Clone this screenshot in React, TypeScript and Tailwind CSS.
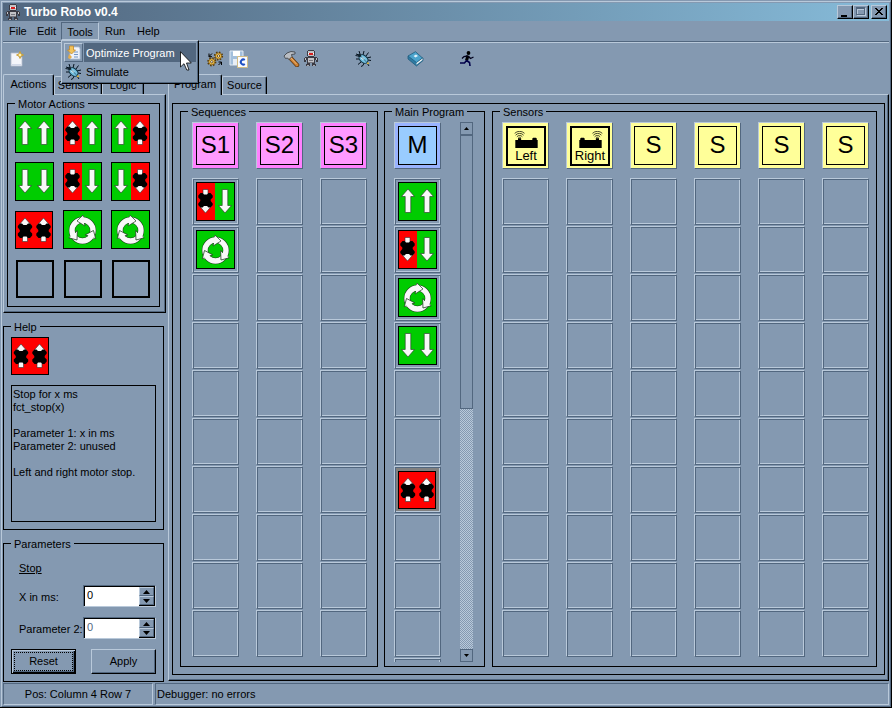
import React from "react";
import clsx from "clsx";

type ActionKind = "fwd" | "rightFwd" | "leftFwd" | "back" | "rightBack" | "leftBack" | "stop" | "ccw" | "cw";

const raised = "border border-t-[#b9c9da] border-l-[#b9c9da] border-r-[#52677f] border-b-[#52677f]";
const sunken = "border border-t-[#52677f] border-l-[#52677f] border-r-[#b9c9da] border-b-[#b9c9da]";

function Arrow({ x, down }: { x: number; down?: boolean }) {
  return (
    <path
      transform={down ? `translate(${x} 19) scale(1 -1)` : `translate(${x} 19)`}
      d="M0 -12 L6.5 -4.5 H2.8 V11.5 H-2.8 V-4.5 H-6.5 Z"
      fill="#f8f8f8"
      stroke="#2d4a2d"
      strokeWidth="0.7"
    />
  );
}

function StopMark({ x, down, y }: { x: number; down?: boolean; y?: number }) {
  return (
    <g transform={`translate(${x} ${y ?? 19}) scale(1 ${down ? -1 : 1})`}>
      <path d="M0 -13 L6.500 -5.500 H-6.500 Z M-2.500 4 H2.500 V10.500 H-2.500 Z" fill="#f8f8f8" stroke="#333" strokeWidth="0.6" />
      <path
        d="M-5 -7.500 H-3 L-1.500 -6 H1.500 L3 -7.500 H5 L7.200 -5 V-3.500 L5.200 -1 V0.500 L7.200 2.500 V4.500 L5 7 H3 L1.500 5.500 H-1.500 L-3 7 H-5 L-7.200 4.500 V2.500 L-5.200 0.500 V-1 L-7.200 -3.500 V-5 Z"
        fill="#000"
      />
    </g>
  );
}

function Rotate({ cw }: { cw?: boolean }) {
  const turns = [0, 120, 240];
  return (
    <g transform={`translate(19.5 20.5) scale(${cw ? -1 : 1} 1)`}>
      <circle r="10.500" fill="none" stroke="#1c3d1c" strokeWidth="6.400" />
      <circle r="10.500" fill="none" stroke="#f8f8f8" strokeWidth="5.400" />
      {turns.map((t) => (
        <g key={t} transform={`rotate(${t})`}>
          <path d="M0.500 -15.500 L-5.500 -9.500 L2.500 -4.500 L1.500 -7.500 V-13.300 Z" fill="#f8f8f8" />
          <path d="M1 -13.300 L0.500 -15.500 L-5.500 -9.500 L2.500 -4.500 L2 -7.500" fill="none" stroke="#1c3d1c" strokeWidth="0.7" />
        </g>
      ))}
    </g>
  );
}

function Tile({ kind }: { kind: ActionKind }) {
  const s = kind === "stop" ? 38 : 39;
  const red = "#ff0000";
  const green = "#00cc00";
  const left = kind === "stop" || kind === "rightFwd" || kind === "rightBack" ? red : green;
  const right = kind === "stop" || kind === "leftFwd" || kind === "leftBack" ? red : green;
  return (
    <svg width={s} height={s} viewBox={`0 0 ${s} ${s}`} className="block shrink-0">
      <rect width={s} height={s} fill="#000" />
      <rect x="1" y="1" width="19" height={s - 2} fill={left} />
      <rect x={kind === "leftFwd" || kind === "leftBack" ? 20 : 19} y="1" width={kind === "leftFwd" || kind === "leftBack" ? 18 : s - 20} height={s - 2} fill={right} />
      {kind === "fwd" && <><Arrow x={10} /><Arrow x={29} /></>}
      {kind === "back" && <><Arrow x={10} down /><Arrow x={29} down /></>}
      {kind === "rightFwd" && <><StopMark x={9.5} y={20} /><Arrow x={29} /></>}
      {kind === "leftFwd" && <><Arrow x={10} /><StopMark x={29} y={20} /></>}
      {kind === "rightBack" && <><StopMark x={9.5} y={18} down /><Arrow x={29} down /></>}
      {kind === "leftBack" && <><Arrow x={10} down /><StopMark x={29} y={18} down /></>}
      {kind === "stop" && <><StopMark x={10} y={20} /><StopMark x={28.5} y={20} /></>}
      {kind === "ccw" && <Rotate />}
      {kind === "cw" && <Rotate cw />}
    </svg>
  );
}

/* ---------- small pictures ---------- */

function RobotIcon() {
  return (
    <svg width="16" height="17" viewBox="0 0 16 17" className="block shrink-0" shapeRendering="crispEdges">
      <path d="M5 0h6v1h1v5h-1v1h3v1h1v4h-2v-2h-1v4h1v2H9v-3H7v3H3v-2h1v-4H3v2H1V8h1V7h3V6H4V1h1z" fill="#3b3b44" />
      <path d="M5 1h6v5H5z M5 8h6v5H5z M2 8h1v2H2z M13 8h1v2h-1z" fill="#c2c2c6" />
      <path d="M6 3h4v2H6z" fill="#d81e1e" />
      <path d="M5 3h1v1H5z M10 3h1v1h-1z" fill="#fff" />
      <path d="M6 10h4v1H6z M5 12h6v1H5z" fill="#77777f" />
      <path d="M4 15h2v1H4z M10 15h2v1h-2z" fill="#a8a8ae" />
    </svg>
  );
}

function NewIcon() {
  return (
    <svg width="16" height="16" viewBox="0 0 16 16" className="block shrink-0">
      <path d="M2 2h8v4h3v9H2z" fill="#f4f6fb" stroke="#b4bccd" strokeWidth="0.8" />
      <path d="M3 13h9v1.5H3z" fill="#d3daea" />
      <path d="M11 0.5l1 2.5 2.5 1-2.5 1-1 2.500-1-2.500-2.500-1 2.500-1z" fill="#fff2a8" stroke="#c99a2c" strokeWidth="0.9" />
    </svg>
  );
}

function GearsIcon() {
  return (
    <svg width="17" height="16" viewBox="0 0 17 16" className="block shrink-0">
      {[[11.500, 5], [4.800, 10.800]].map(([x, y]) => (
        <g key={x} transform={`translate(${x} ${y})`}>
          <circle r="3.700" fill="none" stroke="#5a3b04" strokeWidth="1.800" strokeDasharray="1.500 1.406" />
          <circle r="3" fill="#f9c84e" stroke="#7a5208" strokeWidth="0.7" />
          <circle r="1.200" fill="#fff" stroke="#4a3206" strokeWidth="0.8" />
        </g>
      ))}
      <path d="M2 5.500L5 2.500M2 2.500v3.200h3M14.500 11l-3 3M14.500 14v-3h-3" fill="none" stroke="#000" strokeWidth="1" />
    </svg>
  );
}

function SaveIcon() {
  return (
    <svg width="20" height="18" viewBox="0 0 20 18" className="block shrink-0">
      <path d="M1 1h13v14H1z" fill="#a3bfdc" stroke="#e0e9f3" />
      <path d="M4 1h7v5H4z" fill="#fff" />
      <path d="M4 9h4v6H4z" fill="#e8eef6" />
      <path d="M8.500 6.500h10v11h-10z" fill="#fafbff" stroke="#d3bd86" />
      <path d="M15.800 10a2.500 2.500 0 1 0 0 4" fill="none" stroke="#1d4fc4" strokeWidth="2" />
    </svg>
  );
}

function HammerIcon() {
  return (
    <svg width="17" height="16" viewBox="0 0 17 16" className="block shrink-0">
      <path d="M6.500 6l7.500 8" stroke="#5a3510" strokeWidth="4.500" strokeLinecap="round" />
      <path d="M6.500 6l7.500 8" stroke="#cf8235" strokeWidth="3" strokeLinecap="round" />
      <path d="M7 6l6.500 7" stroke="#eeb777" strokeWidth="1" />
      <path d="M1 5l3-3 4-1.500 4 .5v2L8.500 3.500 9 5.500 6 8.500 4.500 7 2.500 7.500z" fill="#b9bdc3" stroke="#42464c" strokeWidth="0.9" />
    </svg>
  );
}

function BugIcon() {
  return (
    <svg width="17" height="16" viewBox="0 0 17 16" className="block shrink-0">
      <path
        d="M4 4L1 3M5 3L4 0M8 4l1-4M11 5l2.500-3.500M12 7l4-1M13 9l3 .5M12 12l2 3M9 12l-1 2.500-2 1M6 11l-3 2.500M5 8H1M3 5l-2.500-.5"
        stroke="#06131f"
        fill="none"
      />
      <ellipse cx="8.500" cy="8" rx="5" ry="3.500" transform="rotate(40 8.500 8)" fill="#75bfe0" stroke="#0b3040" />
      <path d="M6.500 6.500l2.500 2" stroke="#e6fbff" strokeWidth="1.800" />
      <path d="M5 4.500l6.500 6.500" stroke="#1a5068" strokeWidth="0.7" />
      <circle cx="4.500" cy="4.500" r="1.700" fill="#12232f" />
      <path d="M12 11.500h2v1.500h-2z" fill="#d9b23a" />
    </svg>
  );
}

function BookIcon() {
  return (
    <svg width="17" height="16" viewBox="0 0 17 16" className="block shrink-0">
      <path d="M1 5v3l8.500 7L16 9.500V7z" fill="#2f7ba3" stroke="#225d7e" strokeWidth="0.8" />
      <path d="M9.500 11.500l6-4.500v2l-6 4.800z" fill="#f2f4f4" />
      <path d="M1 5l7.500-4.300 7 6.300-6 4.500z" fill="#4ba3cc" stroke="#225d7e" strokeWidth="0.8" />
      <path d="M6.500 5l2.500-1.500 2 1.500-2.500 1.500z" fill="#dff2fa" />
    </svg>
  );
}

function RunnerIcon() {
  return (
    <svg width="16" height="16" viewBox="0 0 16 16" className="block shrink-0">
      <circle cx="9.500" cy="2" r="1.900" fill="#000" />
      <path d="M9 4.500L7.500 9.500" stroke="#000" strokeWidth="3" />
      <path d="M8.500 5L5 5.500 3 7.500M9.500 5.500L11.500 7.500 14.500 6" stroke="#00001c" strokeWidth="1.300" fill="none" />
      <path d="M7.500 9.500l3 2 .5 3.500M7.500 9.500L5.500 12 1 12" stroke="#00004a" strokeWidth="1.600" fill="none" />
    </svg>
  );
}

function OptimizeIcon() {
  return (
    <svg width="16" height="16" viewBox="0 0 16 16" className="block shrink-0">
      <path d="M5 2h8l1 2v10H4V2z" fill="#eef2fa" stroke="#b3c2d8" strokeWidth="0.8" />
      <path d="M8 7h4M8 9.500h4M8 12h4" stroke="#7395c4" />
      <path d="M3.500 1h4v4h2L5.500 9 1.500 5h2z" fill="#f2c45c" stroke="#c3892a" strokeWidth="0.8" />
      <path d="M3 9l3 3-2 2-2-1z" fill="#e8ad48" />
    </svg>
  );
}

function SensorPicture({ side }: { side: "Left" | "Right" }) {
  return (
    <svg width="27" height="19" viewBox="0 0 27 19" className="block">
      <g transform={side === "Right" ? "translate(27 0) scale(-1 1)" : undefined}>
        <path d="M1 10h3v-2h3.500v2H20V8.500l1-1h3l1 1V10h1v9H1z" fill="#000" />
        <path d="M4.200 8a2 2 0 0 1 3.200 0M2.700 6.500a4 4 0 0 1 6.200 0M1.300 4.700a6 6 0 0 1 9 0M0.300 2.600a8 8 0 0 1 11 0" fill="none" stroke="#000" strokeWidth="0.8" />
      </g>
    </svg>
  );
}

/* ---------- building blocks ---------- */

function Group({ title, className, children }: { title: string; className?: string; children: React.ReactNode }) {
  return (
    <fieldset className={clsx("min-w-0 border border-black", className)}>
      <legend className="ml-[7px] h-[15px] px-[3px] pt-[2px] leading-[13px]">{title}</legend>
      {children}
    </fieldset>
  );
}

function Cell({ kind, label }: { kind?: ActionKind; label: string }) {
  return (
    <button
      type="button"
      aria-label={label}
      className={clsx(
        "block size-[47px] p-[3px] shadow-[inset_1px_1px_0_#52677f,inset_-1px_-1px_0_#b9c9da]",
        raised,
        kind === "stop" && "bg-[#808080]",
      )}
    >
      {kind && <Tile kind={kind} />}
    </button>
  );
}

function HeadCell({ text, outer, inner }: { text: string; outer: string; inner: string }) {
  return (
    <div className={clsx("size-[47px] p-[3px]", raised, outer)}>
      <div className={clsx("flex size-[39px] items-start justify-center border border-black text-[24px] leading-[35px]", inner)}>
        {text}
      </div>
    </div>
  );
}

function SensorHead({ side }: { side: "Left" | "Right" }) {
  return (
    <div className={clsx("size-[47px] bg-[#ffff99] p-[3px]", raised)}>
      <div className="flex size-10 flex-col items-center border-2 border-black pt-[3px]">
        <SensorPicture side={side} />
        <span className="text-[13px] leading-[16px]">{side}</span>
      </div>
    </div>
  );
}

function Column({ head, name, cells = {}, children }: { head: React.ReactNode; name: string; cells?: Record<number, ActionKind>; children?: React.ReactNode }) {
  return (
    <div className="flex w-[47px] shrink-0 flex-col">
      {head}
      <div className="mt-[9px] flex flex-col gap-px">
        {Array.from({ length: 10 }, (_, i) => (
          <Cell key={i} kind={cells[i]} label={`${name} row ${i + 1}`} />
        ))}
        {children}
      </div>
    </div>
  );
}

function Tab({ label, selected, className }: { label: string; selected?: boolean; className: string }) {
  return (
    <button
      type="button"
      role="tab"
      aria-selected={!!selected}
      className={clsx(
        "rounded-t-[2px] border border-b-0 border-t-[#b9c9da] border-l-[#b9c9da] border-r-black bg-[#8499b1] text-center shadow-[inset_-1px_0_0_#52677f]",
        selected ? "relative z-10 -mb-px h-[21px] pb-[2px]" : "h-[18px]",
        className,
      )}
    >
      {label}
    </button>
  );
}

function Spinner({ id, label, disabled }: { id: string; label: string; disabled?: boolean }) {
  return (
    <div className="flex h-[22px] items-center justify-between pr-[7px] pl-[15px]">
      <label htmlFor={id} className="pt-[2px] leading-[13px] whitespace-nowrap">{label}</label>
      <div className={clsx("flex h-[22px] w-[73px] shrink-0", sunken)}>
        <div className="flex flex-1 border-t border-l border-black bg-white">
          <input
            id={id}
            defaultValue="0"
            disabled={disabled}
            className={clsx("w-0 flex-1 bg-white pb-[2px] pl-[2px] outline-none", disabled ? "text-[#52677f]" : "text-black")}
          />
          <div className="flex w-4 flex-col border-r border-b border-black bg-[#8499b1]">
            <button type="button" aria-label="Increase" className={clsx("flex flex-1 items-center justify-center", raised)}>
              <svg width="7" height="4" viewBox="0 0 7 4"><path d="M3.500 0L7 4H0z" /></svg>
            </button>
            <button type="button" aria-label="Decrease" className={clsx("flex flex-1 items-center justify-center", raised)}>
              <svg width="7" height="4" viewBox="0 0 7 4"><path d="M0 0h7L3.500 4z" /></svg>
            </button>
          </div>
        </div>
      </div>
    </div>
  );
}

function WinButton({ label, children, className }: { label: string; children: React.ReactNode; className?: string }) {
  return (
    <button
      type="button"
      aria-label={label}
      className={clsx(
        "h-[14px] w-4 border border-t-[#b9c9da] border-l-[#b9c9da] border-r-black border-b-black bg-[#8499b1] shadow-[inset_-1px_-1px_0_#52677f]",
        className,
      )}
    >
      <svg width="14" height="12" viewBox="0 0 14 12" className="block" shapeRendering="crispEdges">{children}</svg>
    </button>
  );
}

function ToolButton({ label, className, children }: { label: string; className?: string; children: React.ReactNode }) {
  return (
    <button type="button" aria-label={label} className={clsx("flex h-5 w-5 shrink-0 items-center justify-center", className)}>
      {children}
    </button>
  );
}

const palette: ActionKind[] = ["fwd", "rightFwd", "leftFwd", "back", "rightBack", "leftBack", "stop", "ccw", "cw"];

const pink = { outer: "bg-[#ff80ff]", inner: "bg-[#ff99ff]" };
const blue = { outer: "bg-[#99b3ff]", inner: "bg-[#99ccff]" };
const yellow = { outer: "bg-[#ffff99]", inner: "bg-[#ffff99]" };

export default function App() {
  return (
    <div className="flex min-h-screen flex-col border-r border-b border-black bg-[#8499b1] pt-px pl-px font-['Liberation_Sans',Arial,sans-serif] text-[11px] text-black">
      <div className={clsx("flex flex-1 flex-col p-px", raised)}>
        {/* Title bar */}
        <header className="flex h-[18px] items-center bg-linear-to-r from-[#52677f] to-[#86bbd9] pr-[2px] pl-[2px]">
          <RobotIcon />
          <h1 className="ml-[3px] flex-1 text-[12px] leading-[18px] font-bold text-white">Turbo Robo v0.4</h1>
          <WinButton label="Minimize"><path d="M3 9h6v2H3z" /></WinButton>
          <WinButton label="Maximize">
            <path d="M3.500 2.500h8v7h-8z M3 3.500h9" fill="none" stroke="#b9c9da" />
            <path d="M2.500 1.500h8v7h-8z M2 2.500h9" fill="none" stroke="#52677f" />
          </WinButton>
          <WinButton label="Close" className="ml-[2px]">
            <path d="M3 2h2v1h1v1h2V3h1V2h2v1h-1v1H9v1H8v1h1v1h1v1h1v1H9V8H8V7H6v1H5v1H3V8h1V7h1V6h1V5H5V4H4V3H3z" />
          </WinButton>
        </header>

        {/* Menu bar */}
        <nav className="relative z-20 flex h-[21px] items-center border-b border-[#52677f] pl-px">
          <button type="button" className="h-[18px] w-7 px-[5px] text-left">File</button>
          <button type="button" className="h-[18px] w-[29px] px-[5px] text-left">Edit</button>
          <div className="relative">
            <button type="button" aria-expanded="true" className={clsx("block h-[18px] w-[38px] pt-[2px] leading-[14px]", sunken)}>Tools</button>
            <div
              role="menu"
              className="absolute top-[18px] left-0 w-[138px] border border-t-[#b9c9da] border-l-[#b9c9da] border-r-black border-b-black bg-[#8499b1] p-[2px] shadow-[inset_-1px_-1px_0_#52677f]"
            >
              <button type="button" role="menuitem" className="flex h-[19px] w-full items-center text-left text-white">
                <span className={clsx("flex size-[19px] items-center justify-center", raised)}><OptimizeIcon /></span>
                <span className="ml-px flex-1 bg-[#52677f] pt-px pl-[2px] leading-[18px] whitespace-nowrap">Optimize Program</span>
              </button>
              <button type="button" role="menuitem" className="flex h-[19px] w-full items-center pl-px text-left">
                <BugIcon />
                <span className="ml-1 pt-px leading-[18px]">Simulate</span>
              </button>
            </div>
            <svg width="12" height="20" viewBox="0 0 12 20" className="pointer-events-none absolute top-[29px] left-[119px]">
              <path d="M0.500 0.700V16L4 12.700 6.800 19H9L6.500 12H11.300z" fill="#fff" stroke="#000" strokeWidth="0.8" />
            </svg>
          </div>
          <button type="button" className="h-[18px] w-8 px-[6px] text-left">Run</button>
          <button type="button" className="h-[18px] px-[6px] text-left">Help</button>
        </nav>

        {/* Tool bar */}
        <div role="toolbar" aria-label="Tools" className="flex h-8 items-center border-t border-[#b9c9da] pl-1">
          <ToolButton label="New"><NewIcon /></ToolButton>
          <ToolButton label="Compile" className="ml-[178px]"><GearsIcon /></ToolButton>
          <ToolButton label="Save source" className="ml-1"><SaveIcon /></ToolButton>
          <ToolButton label="Build" className="ml-8"><HammerIcon /></ToolButton>
          <ToolButton label="Robot"><RobotIcon /></ToolButton>
          <ToolButton label="Debug" className="ml-8"><BugIcon /></ToolButton>
          <ToolButton label="Manual" className="ml-8"><BookIcon /></ToolButton>
          <ToolButton label="Run" className="ml-8"><RunnerIcon /></ToolButton>
        </div>

        <main className="flex flex-1 gap-[2px]">
          {/* Left side */}
          <aside className="flex w-[163px] shrink-0 flex-col">
            <div role="tablist" className="flex h-5 items-end">
              <Tab label="Actions" selected className="w-[51px]" />
              <Tab label="Sensors" className="w-12" />
              <Tab label="Logic" className="w-[42px]" />
            </div>
            <section className="border border-t-[#b9c9da] border-l-[#b9c9da] border-r-black border-b-black pt-px pr-[5px] pb-[5px] pl-[3px] shadow-[inset_-1px_-1px_0_#52677f]">
              <Group title="Motor Actions">
                <div className="grid grid-cols-[39px_39px_39px] gap-[9px] pt-[3px] pb-2 pl-[7px]">
                  {palette.map((k) => (
                    <button key={k} type="button" aria-label={k} className="size-[39px]"><Tile kind={k} /></button>
                  ))}
                  {[0, 1, 2].map((i) => (
                    <div key={i} className="mt-[2px] ml-px size-[38px] border-2 border-black" />
                  ))}
                </div>
              </Group>
            </section>

            <Group title="Help" className="mt-[6px] mr-[2px]">
              <div className="px-[7px] pt-[3px] pb-[7px]">
                <Tile kind="stop" />
                <div className="mt-[10px] h-[137px] border border-black px-px py-[2px] leading-[13px]">
                  <p>Stop for x ms</p>
                  <p>fct_stop(x)</p>
                  <p className="mt-[13px]">Parameter 1: x in ms</p>
                  <p>Parameter 2: unused</p>
                  <p className="mt-[13px]">Left and right motor stop.</p>
                </div>
              </div>
            </Group>

            <Group title="Parameters" className="mt-[6px] mr-[2px] pb-[7px]">
              <p className="pt-[10px] pl-[15px] leading-[14px] underline underline-offset-1">Stop</p>
              <div className="mt-[10px] flex flex-col gap-[10px]">
                <Spinner id="x-ms" label="X in ms:" />
                <Spinner id="p2" label="Parameter 2:" disabled />
                <div className="flex justify-between px-[7px]">
                  <button
                    type="button"
                    className="h-[25px] w-[65px] border border-black p-[2px] shadow-[inset_1px_1px_0_#b9c9da,inset_-1px_-1px_0_#000,inset_-2px_-2px_0_#52677f]"
                  >
                    <span className="block border border-dotted border-black leading-[17px]">Reset</span>
                  </button>
                  <button
                    type="button"
                    className="h-[25px] w-[65px] border border-t-[#b9c9da] border-l-[#b9c9da] border-r-black border-b-black shadow-[inset_-1px_-1px_0_#52677f]"
                  >
                    Apply
                  </button>
                </div>
              </div>
            </Group>
          </aside>

          {/* Program page */}
          <div className="flex min-w-0 flex-1 flex-col pb-px">
            <div role="tablist" className="flex h-5 items-end">
              <Tab label="Program" selected className="w-[54px]" />
              <Tab label="Source" className="w-[45px]" />
            </div>
            <section className="flex flex-1 border border-t-[#b9c9da] border-l-[#b9c9da] border-r-black border-b-black pt-2 pr-[3px] pb-[5px] pl-[3px] shadow-[inset_-1px_-1px_0_#52677f]">
              <div className="flex min-w-0 flex-1 gap-[6px] border border-black px-[7px] pb-[7px]">
                <Group title="Sequences" className="shrink-0">
                  <div className="flex gap-[17px] pt-[3px] pr-[10px] pb-[9px] pl-[11px]">
                    <Column name="S1" head={<HeadCell text="S1" {...pink} />} cells={{ 0: "rightBack", 1: "cw" }} />
                    <Column name="S2" head={<HeadCell text="S2" {...pink} />} />
                    <Column name="S3" head={<HeadCell text="S3" {...pink} />} />
                  </div>
                </Group>

                <Group title="Main Program" className="shrink-0">
                  <div className="flex gap-[19px] pt-[3px] pr-[11px] pb-1 pl-[9px]">
                    <Column
                      name="Main"
                      head={<HeadCell text="M" {...blue} />}
                      cells={{ 0: "fwd", 1: "rightBack", 2: "cw", 3: "back", 6: "stop" }}
                    >
                      <div className="h-[4px] border border-b-0 border-t-[#b9c9da] border-l-[#b9c9da] border-r-[#52677f] shadow-[inset_1px_1px_0_#52677f,inset_-1px_0_0_#b9c9da]" />
                    </Column>
                    <div className="flex w-[13px] flex-col bg-[repeating-conic-gradient(#b9c9da_0_25%,#8499b1_0_50%)] bg-[length:2px_2px]">
                      <button type="button" aria-label="Scroll up" className="flex h-[13px] items-center justify-center border border-[#52677f] bg-[#8499b1]">
                        <svg width="5" height="3" viewBox="0 0 5 3"><path d="M2.500 0L5 3H0z" /></svg>
                      </button>
                      <div className="h-[274px] border border-[#52677f] bg-[#8499b1]" />
                      <button type="button" aria-label="Scroll down" className="mt-auto flex h-[13px] items-center justify-center border border-[#52677f] bg-[#8499b1]">
                        <svg width="5" height="3" viewBox="0 0 5 3"><path d="M0 0h5L2.500 3z" /></svg>
                      </button>
                    </div>
                  </div>
                </Group>

                <Group title="Sensors" className="ml-px flex-1">
                  <div className="flex gap-[17px] pt-[3px] pr-[7px] pb-[9px] pl-[9px]">
                    <Column name="Left sensor" head={<SensorHead side="Left" />} />
                    <Column name="Right sensor" head={<SensorHead side="Right" />} />
                    {[3, 4, 5, 6].map((n) => (
                      <Column key={n} name={`Sensor ${n}`} head={<HeadCell text="S" {...yellow} />} />
                    ))}
                  </div>
                </Group>
              </div>
            </section>
          </div>
        </main>

        {/* Status bar */}
        <footer className="mt-px flex h-[22px] gap-[2px] leading-[20px]">
          <div className={clsx("w-[150px] text-center", sunken)}>Pos: Column 4 Row 7</div>
          <div className={clsx("flex-1 pl-px", sunken)}>Debugger: no errors</div>
        </footer>
      </div>
    </div>
  );
}
